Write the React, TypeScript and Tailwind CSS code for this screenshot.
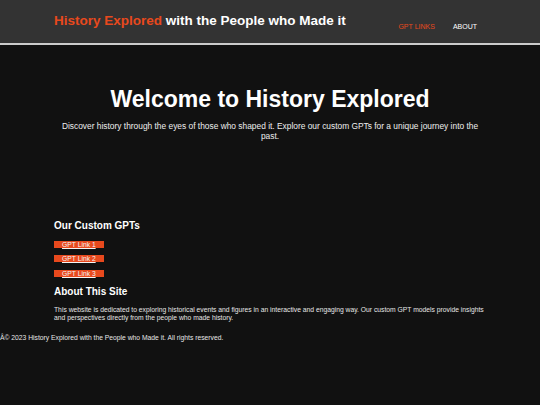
import React from 'react';

const links = ['GPT Link 1', 'GPT Link 2', 'GPT Link 3'];

export default function App() {
  return (
    <div className="min-h-screen bg-[#111111] text-white font-['Liberation_Sans',Arial,sans-serif]">
      {/* Header */}
      <header className="h-[45px] bg-[#333333] border-b-2 border-[#cccccc]">
        <div className="w-[80%] mx-auto flex justify-between">
          <h1 className="mt-[13px] text-[13.5px] leading-[16px] font-bold">
            <span className="text-[#e8491d]">History Explored</span> with the People who Made it
          </h1>
          <nav className="mt-[23px]">
            <ul className="flex text-[7px] leading-[8px] uppercase">
              <li className="px-[9px]">
                <a href="#gpts" className="text-[#e8491d]">GPT Links</a>
              </li>
              <li className="px-[9px]">
                <a href="#about" className="text-white">About</a>
              </li>
            </ul>
          </nav>
        </div>
      </header>

      {/* Showcase */}
      <section className="w-[80%] mx-auto pt-[41px] text-center">
        <h1 className="text-[23px] leading-[26px] font-bold">Welcome to History Explored</h1>
        <p className="mt-[9px] text-[8.4px] leading-[10px] text-[#eeeeee]">
          Discover history through the eyes of those who shaped it. Explore our custom GPTs for a unique journey into the past.
        </p>
      </section>

      {/* Content */}
      <section className="w-[80%] mx-auto">
        <h2 id="gpts" className="mt-[79px] text-[10px] leading-[12px] font-bold">Our Custom GPTs</h2>
        <div className="mt-[9px] flex flex-col items-start gap-[7.3px]">
          {links.map((l) => (
            <a
              key={l}
              href="#"
              className="inline-block h-[7px] px-[8px] bg-[#e8491d] text-[6.75px] leading-[7px] text-[#f4f4f4] underline"
            >
              {l}
            </a>
          ))}
        </div>
        <h2 id="about" className="mt-[9px] text-[10px] leading-[12px] font-bold">About This Site</h2>
        <p className="mt-[8.5px] text-[6.75px] leading-[7.8px] text-[#e6e6e6]">
          This website is dedicated to exploring historical events and figures in an interactive and engaging way. Our custom GPT models provide insights and perspectives directly from the people who made history.
        </p>
      </section>

      <footer className="mt-[12.4px] text-[6.75px] leading-[8px] text-[#e6e6e6]">
        <p>Â© 2023 History Explored with the People who Made it. All rights reserved.</p>
      </footer>
    </div>
  );
}
